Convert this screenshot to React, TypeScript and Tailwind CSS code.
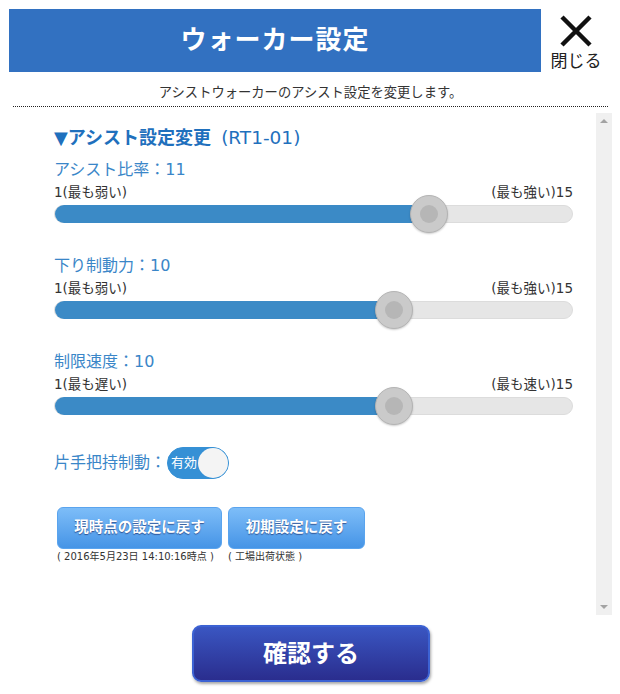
import React from "react";

const FONT = { fontFamily: '"DejaVu Sans", "Noto Sans CJK JP", sans-serif' };

function Slider({
  label,
  min,
  max,
  pct,
  last,
}: {
  label: string;
  min: string;
  max: string;
  pct: number;
  last?: boolean;
}) {
  return (
    <div className={last ? "" : "mb-[32px]"}>
      <div className="h-[22px] leading-[22px] text-[16px] text-[#3a86c8]">{label}</div>
      <div className="w-[519px] h-[22px] leading-[22px] text-[13.5px] text-[#333] flex justify-between">
        <span>{min}</span>
        <span>{max}</span>
      </div>
      <div className="mt-[2px] relative h-[18px] w-[519px] rounded-full bg-[#e6e6e6] border border-[#dcdcdc]">
        <div
          className="absolute left-0 top-[-1px] bottom-[-1px] rounded-l-full bg-[#3b8ac6]"
          style={{ width: `${pct}%` }}
        />
        <div
          className="absolute top-1/2 w-[38px] h-[38px] -translate-x-1/2 -translate-y-1/2 rounded-full bg-[#cacaca] border border-[#b4b4b4] flex items-center justify-center shadow-[0_1px_2px_rgba(0,0,0,0.2)]"
          style={{ left: `${pct}%` }}
        >
          <div className="w-[18px] h-[18px] rounded-full bg-[#b6b6b6]" />
        </div>
      </div>
    </div>
  );
}

export default function App() {
  return (
    <div className="w-[620px] h-[694px] bg-white relative overflow-hidden" style={FONT}>
      {/* Header */}
      <div className="flex pt-[9px] pl-[9px]">
        <div className="w-[532px] h-[63px] bg-[#3271c1] flex items-center justify-center">
          <span className="text-white font-bold text-[26px] tracking-[1px]">ウォーカー設定</span>
        </div>
        <div className="w-[70px] flex flex-col items-center pt-[6px]">
          <svg width="34" height="32" viewBox="0 0 34 32">
            <path d="M3 2 L31 30 M31 2 L3 30" stroke="#111" strokeWidth="4.5" />
          </svg>
          <span className="text-[17px] leading-[22px] text-[#222] mt-[3px]">閉じる</span>
        </div>
      </div>

      {/* Subtitle */}
      <div className="mx-[13px] w-[595px] mt-[11px] h-[24px] leading-[20px] text-center text-[13.3px] text-[#333] border-b border-dotted border-[#222]">
        アシストウォーカーのアシスト設定を変更します。
      </div>

      {/* Scroll area */}
      <div className="mt-[6px] ml-[13px] w-[599px] h-[502px] flex">
        <div className="flex-1 pl-[41px] pt-[13px]">
          <div className="h-[24px] leading-[24px] text-[18px] text-[#1f70bd] mb-[9px] flex items-center">
            <span className="font-bold">▼アシスト設定変更</span>
            <span className="ml-[10px] text-[18.5px]">(RT1-01)</span>
          </div>
          <Slider label="アシスト比率：11" min="1(最も弱い)" max="(最も強い)15" pct={72.4} />
          <Slider label="下り制動力：10" min="1(最も弱い)" max="(最も強い)15" pct={65.5} />
          <Slider label="制限速度：10" min="1(最も遅い)" max="(最も速い)15" pct={65.5} last />

          {/* Toggle row */}
          <div className="mt-[32px] flex items-center h-[32px]">
            <span className="text-[16px] text-[#3a86c8]">片手把持制動：</span>
            <div className="ml-[1px] w-[62px] h-[32px] rounded-full bg-[#3590d5] flex items-center justify-between pl-[3px] border border-[#3590d5]">
              <span className="text-white text-[13px] leading-[16px]">有効</span>
              <div className="w-[30px] h-[30px] rounded-full bg-[#f4f4f4]" />
            </div>
          </div>

          {/* Buttons */}
          <div className="mt-[28px] flex gap-[6px] pl-[3px]">
            <div className="flex flex-col">
              <div className="w-[165px] h-[42px] rounded-[6px] border border-[#5aa4ee] bg-gradient-to-b from-[#7dbdf8] to-[#4594e6] flex items-center justify-center text-white font-bold text-[14.5px] [text-shadow:0_1px_1px_rgba(0,0,60,0.5)]">
                現時点の設定に戻す
              </div>
              <div className="mt-[1px] h-[14px] leading-[14px] text-[10px] text-[#333] whitespace-nowrap">
                ( 2016年5月23日 14:10:16時点 )
              </div>
            </div>
            <div className="flex flex-col">
              <div className="w-[137px] h-[42px] rounded-[6px] border border-[#5aa4ee] bg-gradient-to-b from-[#7dbdf8] to-[#4594e6] flex items-center justify-center text-white font-bold text-[14.5px] [text-shadow:0_1px_1px_rgba(0,0,60,0.5)]">
                初期設定に戻す
              </div>
              <div className="mt-[1px] h-[14px] leading-[14px] text-[10px] text-[#333] whitespace-nowrap">
                ( 工場出荷状態 )
              </div>
            </div>
          </div>
        </div>
        {/* Scrollbar */}
        <div className="w-[16px] h-full bg-[#f0f0f0] flex flex-col items-center justify-between py-[6px]">
          <div className="w-0 h-0 border-l-[4px] border-r-[4px] border-b-[4px] border-l-transparent border-r-transparent border-b-[#a3a3a3]" />
          <div className="w-0 h-0 border-l-[4px] border-r-[4px] border-t-[4px] border-l-transparent border-r-transparent border-t-[#a3a3a3]" />
        </div>
      </div>

      {/* Confirm */}
      <div className="mt-[10px] flex justify-center">
        <div className="ml-[2px] w-[238px] h-[57px] rounded-[9px] border-[2px] border-[#3c62d3] bg-gradient-to-b from-[#3a56c2] to-[#2a2d8e] flex items-center justify-center text-white font-bold text-[24px] shadow-[1px_2px_3px_rgba(0,0,0,0.35)]">
          確認する
        </div>
      </div>
    </div>
  );
}
